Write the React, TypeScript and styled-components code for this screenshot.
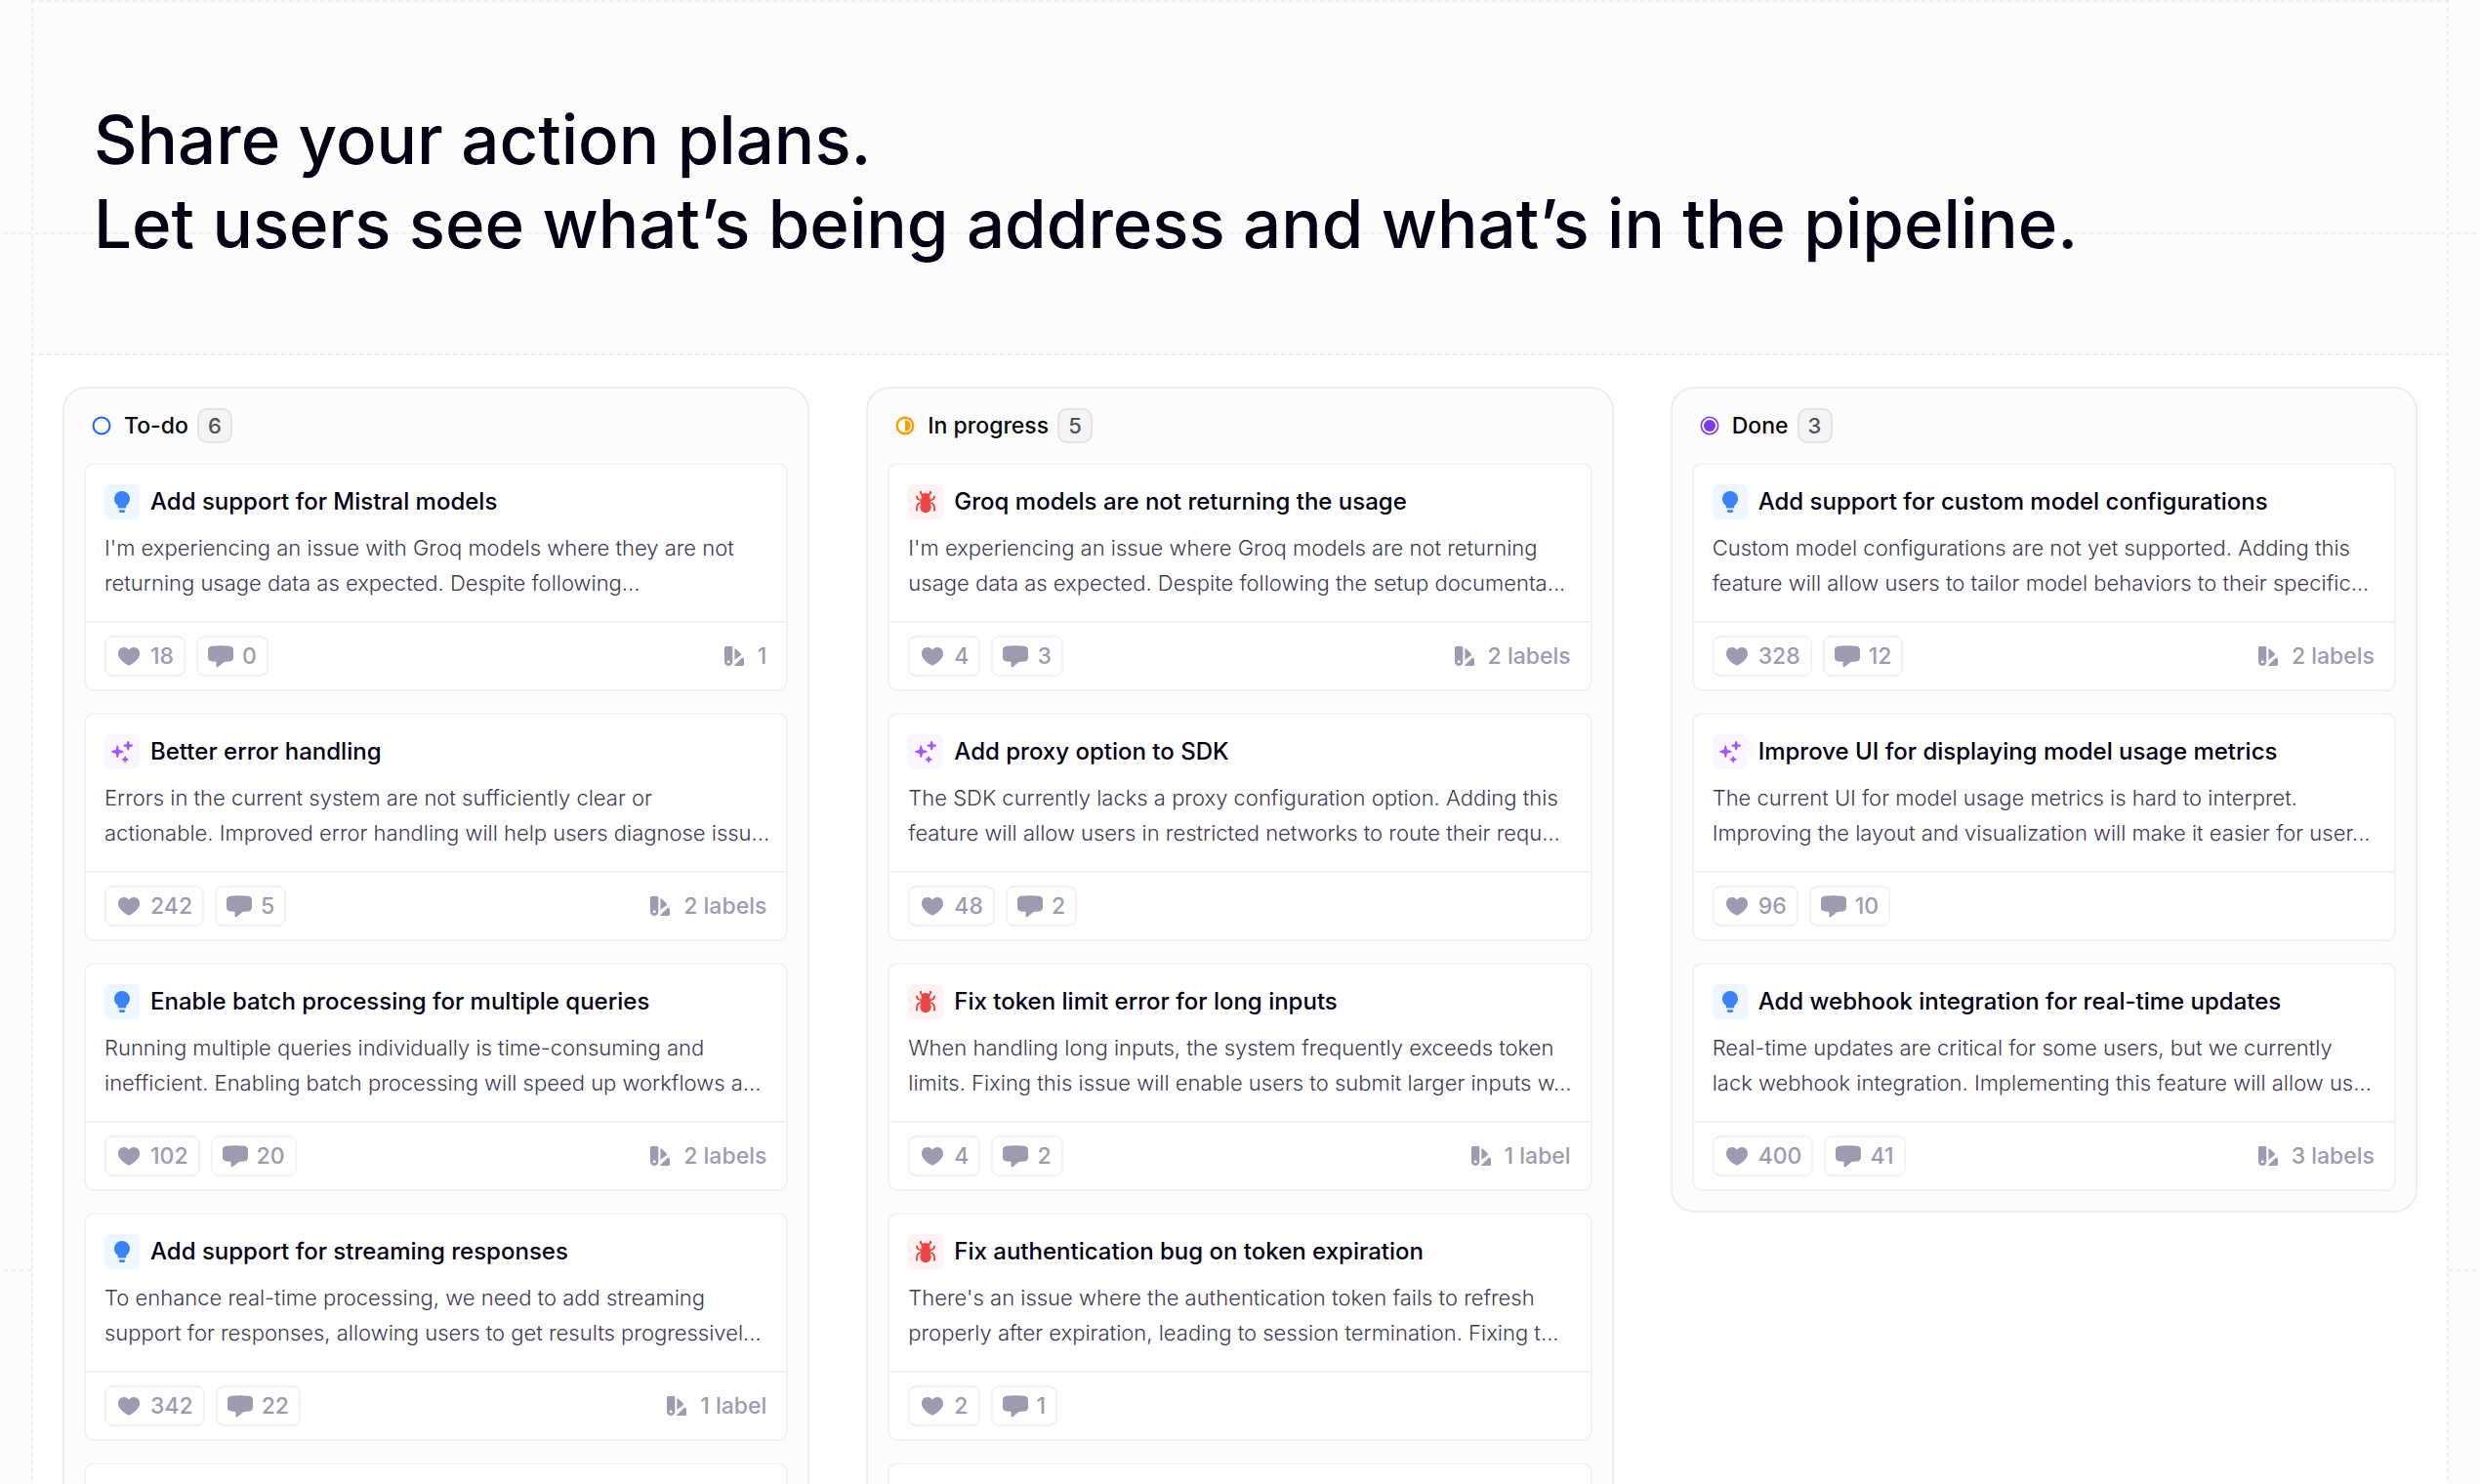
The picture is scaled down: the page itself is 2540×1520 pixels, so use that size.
import React from "react";
import styled, { createGlobalStyle } from "styled-components";

const line = "#eeeeee";
const font = `Inter, "Liberation Sans", sans-serif`;

const GlobalStyle = createGlobalStyle`
  *, *::before, *::after { box-sizing: border-box; }
  body { margin: 0; background: #fcfcfc; font-family: ${font}; }
`;

const rowDash = `repeating-linear-gradient(90deg, ${line} 0 4px, transparent 4px 8px)`;
const colDash = `repeating-linear-gradient(180deg, ${line} 0 4px, transparent 4px 8px)`;

const Page = styled.div`
  position: relative;
  height: 100vh;
  overflow: hidden;
  padding: 0 32px;
  background: #fcfcfc;
`;

const Guide = styled.div<{ $top: number }>`
  position: absolute;
  top: ${(p) => p.$top}px;
  left: 4px;
  right: 4px;
  height: 2px;
  background: ${rowDash};
`;

const Frame = styled.main`
  position: relative;
  min-height: 100%;
  background: ${colDash} left top / 2px 100% no-repeat, ${colDash} right top / 2px 100% no-repeat;
`;

const Hero = styled.header`
  position: relative;
  padding: 100px 64px 92px;
  background: ${rowDash} left top / 100% 2px no-repeat, ${rowDash} left bottom / 100% 2px no-repeat;
`;

const Heading = styled.h1`
  margin: 0;
  font-size: 69px;
  line-height: 86px;
  font-weight: 500;
  color: #030014;
`;

const Board = styled.section`
  display: grid;
  grid-template-columns: repeat(3, minmax(0, 1fr));
  align-items: start;
  gap: 58px;
  margin: 0 2px;
  padding: 32px 30px;
  min-height: 1160px;
  background: #ffffff;
`;

const Column = styled.section`
  padding: 20px;
  border: 2px solid ${line};
  border-radius: 24px;
  background: #fcfcfc;
`;

const ColumnHead = styled.div`
  display: flex;
  align-items: center;
  height: 36px;
  padding-left: 8px;
  margin-bottom: 20px;
`;

const ColumnTitle = styled.h2`
  margin: 0 9px 0 13px;
  font-size: 23px;
  line-height: 36px;
  font-weight: 500;
  color: #09090b;
`;

const Badge = styled.span`
  min-width: 36px;
  height: 36px;
  border: 2px solid #e4e4e7;
  border-radius: 10px;
  background: #f4f4f5;
  font-size: 22px;
  line-height: 32px;
  font-weight: 500;
  text-align: center;
  color: #52525b;
`;

const CardList = styled.div`
  display: flex;
  flex-direction: column;
  gap: 22px;
`;

const Card = styled.article`
  min-height: 234px;
  border: 2px solid #f2f2f3;
  border-radius: 10px;
  background: #ffffff;
`;

const CardBody = styled.div`
  padding: 20px 19px 21px;
`;

const CardHead = styled.div`
  display: flex;
  align-items: center;
  gap: 11px;
  margin-bottom: 11px;
`;

const KindBox = styled.span<{ $bg: string; $fg: string }>`
  display: grid;
  place-items: center;
  width: 36px;
  height: 36px;
  border-radius: 6px;
  background: ${(p) => p.$bg};
  color: ${(p) => p.$fg};
`;

const CardTitle = styled.h3`
  margin: 0;
  font-size: 24px;
  line-height: 36px;
  font-weight: 500;
  color: #030014;
`;

const Text = styled.p`
  margin: 0;
  font-size: 22px;
  line-height: 36px;
  font-weight: 300;
  white-space: pre;
  color: #3f3b54;
`;

const CardFoot = styled.div`
  display: flex;
  align-items: center;
  gap: 11px;
  padding: 13px 20px 13px 19px;
  border-top: 2px solid #f2f2f3;
`;

const Counter = styled.button`
  display: flex;
  align-items: center;
  gap: 9px;
  height: 42px;
  padding: 0 10px;
  border: 2px solid #f2f2f3;
  border-radius: 8px;
  background: #ffffff;
  font: 500 23px/38px ${font};
  color: #9e9bb0;
`;

const Labels = styled.span`
  display: flex;
  align-items: center;
  gap: 14px;
  margin-left: auto;
  font-size: 23px;
  line-height: 42px;
  font-weight: 500;
  color: #9e9bb0;
`;

const HeartIcon = () => (
  <svg width="26" height="26" viewBox="0 0 26 26" fill="currentColor" aria-hidden="true">
    <path d="M13 22.4c-.4 0-.9-.1-1.300-.4C8 20 2 15.600 2 10.400 2 6.900 4.500 4.100 7.900 4.100c2 0 3.900 1 5.100 2.500 1.200-1.500 3.100-2.500 5.100-2.500 3.400 0 5.900 2.800 5.900 6.300 0 5.200-6 9.600-9.700 11.600-.4.300-.9.400-1.300.4z" />
  </svg>
);

const CommentIcon = () => (
  <svg width="26" height="26" viewBox="0 0 26 26" fill="currentColor" aria-hidden="true">
    <path d="M4 2.800C10 1.900 16 1.900 22 2.800c2.600.4 4 1.800 4 4.200v7.400c0 2.400-1.400 3.800-4 4.100-1.800.2-3.500.4-5.300.4l-6.300 5.100c-.9.700-1.900.2-1.900-.9v-4.300c-1.500-.1-3-.2-4.500-.4C1.400 18 0 16.700 0 14.400V7c0-2.400 1.400-3.800 4-4.200z" />
  </svg>
);

const SwatchIcon = () => (
  <svg width="20" height="20" viewBox="0 0 20 20" fill="currentColor" aria-hidden="true">
    <path
      fillRule="evenodd"
      d="M1.500 0h5.300c.8 0 1.500.7 1.500 1.500v14.300a4.150 4.150 0 0 1-8.300 0V1.500C0 .7.700 0 1.500 0zm2.650 14.200a1.500 1.500 0 1 0 0 3 1.500 1.500 0 0 0 0-3z"
    />
    <path d="M10.400 14V2.300c.7 0 1.200.2 1.600.6l4.600 4.300c.6.600.6 1.500 0 2.100z" />
    <path d="M9.600 20l8.200-8.300h.7c.8 0 1.500.7 1.500 1.500v5.300c0 .8-.7 1.500-1.500 1.500z" />
  </svg>
);

const BulbIcon = () => (
  <svg width="24" height="24" viewBox="0 0 24 24" fill="currentColor" aria-hidden="true">
    <path d="M12 1a8 8 0 0 1 8 8c0 2.900-1.500 5.300-3.700 6.800v1.400c0 .8-.6 1.300-1.300 1.300H9c-.7 0-1.300-.5-1.300-1.300v-1.400A8.200 8.200 0 0 1 4 9a8 8 0 0 1 8-8z" />
    <rect x="8.800" y="20.300" width="6.400" height="2.600" rx="1.300" />
  </svg>
);

const SparklesIcon = () => (
  <svg width="24" height="24" viewBox="0 0 24 24" fill="currentColor" aria-hidden="true">
    <path d="M7.300 5.600c.5 0 .8.300.9.800l.8 3.600 3.700.9c1 .3 1 1.600 0 1.900L9 13.700l-.8 3.600c-.2 1-1.600 1-1.800 0l-.8-3.600-3.700-.9c-1-.3-1-1.600 0-1.900L5.600 10l.8-3.600c.1-.5.4-.8.9-.8z" />
    <path d="M18.200.9c.5 0 .8.300.9.700l.6 2.600 2.600.6c1 .2 1 1.600 0 1.800l-2.600.6-.6 2.600c-.2.900-1.600.9-1.800 0l-.6-2.600-2.600-.6c-1-.2-1-1.600 0-1.800l2.600-.6.600-2.600c.1-.4.400-.7.900-.7z" />
    <path d="M15.200 16.600c.5 0 .8.300.9.700l.3 1.300 1.400.4c.9.200.9 1.500 0 1.700l-1.400.4-.3 1.300c-.2.900-1.600.9-1.800 0l-.3-1.300-1.400-.4c-.9-.2-.9-1.500 0-1.700l1.400-.4.3-1.300c.1-.4.400-.7.900-.7z" />
  </svg>
);

const BugIcon = () => (
  <svg width="24" height="24" viewBox="0 0 24 24" fill="currentColor" aria-hidden="true">
    <path d="M12 2.900c2.600 0 4.600 1.700 4.600 4 0 1.700-1 2.700-2.300 3.300H9.700C8.400 9.600 7.400 8.600 7.400 6.900c0-2.300 2-4 4.600-4z" />
    <rect x="7" y="9" width="10" height="5" rx="2.200" />
    <ellipse cx="12" cy="17.300" rx="5.600" ry="5.900" />
    <g fill="none" stroke="currentColor" strokeWidth="1.900" strokeLinecap="round" strokeLinejoin="round">
      <path d="M9.200 4.900C7.500 4.400 6.700 3.300 6.900 1.700M14.800 4.900c1.700-.5 2.500-1.600 2.300-3.200" />
      <path d="M8.600 10.300C5 10.300 3.100 9 3.100 6.500M15.400 10.300c3.600 0 5.500-1.300 5.500-3.800" />
      <path d="M8.600 12.900c-3.800.2-5.500 1.900-5.500 4.700v3.200M15.400 12.900c3.800.2 5.500 1.900 5.500 4.700v3.200" />
    </g>
  </svg>
);

type Kind = "idea" | "bug" | "improvement";

const kinds: Record<Kind, { bg: string; fg: string; icon: React.ReactNode }> = {
  idea: { bg: "#eff6ff", fg: "#3b82f6", icon: <BulbIcon /> },
  bug: { bg: "#fef2f2", fg: "#ef4444", icon: <BugIcon /> },
  improvement: { bg: "#faf5ff", fg: "#a855f7", icon: <SparklesIcon /> },
};

type Status = "todo" | "progress" | "done";

const StatusIcon = ({ status }: { status: Status }) => (
  <svg width="20" height="20" viewBox="0 0 20 20" fill="none" aria-hidden="true">
    {status === "todo" && <circle cx="10" cy="10" r="8.500" stroke="#2563eb" strokeWidth="2" />}
    {status === "progress" && (
      <>
        <circle cx="10" cy="10" r="8.300" stroke="#f59e0b" strokeWidth="2.400" />
        <path d="M10 4.200a5.800 5.800 0 0 1 0 11.600z" fill="#f59e0b" />
      </>
    )}
    {status === "done" && (
      <>
        <circle cx="10" cy="10" r="8.700" stroke="#7c3aed" strokeWidth="1.600" />
        <circle cx="10" cy="10" r="6" fill="#7c3aed" />
      </>
    )}
  </svg>
);

type Item = { kind: Kind; title: string; text: string; likes: number; comments: number; labels?: string };
type ColumnData = { status: Status; name: string; count: number; more: boolean; items: Item[] };

const columns: ColumnData[] = [
  {
    status: "todo",
    name: "To-do",
    count: 6,
    more: true,
    items: [
      { kind: "idea", title: "Add support for Mistral models", text: "I'm experiencing an issue with Groq models where they are not\nreturning usage data as expected. Despite following...", likes: 18, comments: 0, labels: "1" },
      { kind: "improvement", title: "Better error handling", text: "Errors in the current system are not sufficiently clear or\nactionable. Improved error handling will help users diagnose issu...", likes: 242, comments: 5, labels: "2 labels" },
      { kind: "idea", title: "Enable batch processing for multiple queries", text: "Running multiple queries individually is time-consuming and\ninefficient. Enabling batch processing will speed up workflows a...", likes: 102, comments: 20, labels: "2 labels" },
      { kind: "idea", title: "Add support for streaming responses", text: "To enhance real-time processing, we need to add streaming\nsupport for responses, allowing users to get results progressivel...", likes: 342, comments: 22, labels: "1 label" },
    ],
  },
  {
    status: "progress",
    name: "In progress",
    count: 5,
    more: true,
    items: [
      { kind: "bug", title: "Groq models are not returning the usage", text: "I'm experiencing an issue where Groq models are not returning\nusage data as expected. Despite following the setup documenta...", likes: 4, comments: 3, labels: "2 labels" },
      { kind: "improvement", title: "Add proxy option to SDK", text: "The SDK currently lacks a proxy configuration option. Adding this\nfeature will allow users in restricted networks to route their requ...", likes: 48, comments: 2 },
      { kind: "bug", title: "Fix token limit error for long inputs", text: "When handling long inputs, the system frequently exceeds token\nlimits. Fixing this issue will enable users to submit larger inputs w...", likes: 4, comments: 2, labels: "1 label" },
      { kind: "bug", title: "Fix authentication bug on token expiration", text: "There's an issue where the authentication token fails to refresh\nproperly after expiration, leading to session termination. Fixing t...", likes: 2, comments: 1 },
    ],
  },
  {
    status: "done",
    name: "Done",
    count: 3,
    more: false,
    items: [
      { kind: "idea", title: "Add support for custom model configurations", text: "Custom model configurations are not yet supported. Adding this\nfeature will allow users to tailor model behaviors to their specific...", likes: 328, comments: 12, labels: "2 labels" },
      { kind: "improvement", title: "Improve UI for displaying model usage metrics", text: "The current UI for model usage metrics is hard to interpret.\nImproving the layout and visualization will make it easier for user...", likes: 96, comments: 10 },
      { kind: "idea", title: "Add webhook integration for real-time updates", text: "Real-time updates are critical for some users, but we currently\nlack webhook integration. Implementing this feature will allow us...", likes: 400, comments: 41, labels: "3 labels" },
    ],
  },
];

const ItemCard = ({ item }: { item: Item }) => {
  const kind = kinds[item.kind];
  return (
    <Card>
      <CardBody>
        <CardHead>
          <KindBox $bg={kind.bg} $fg={kind.fg}>{kind.icon}</KindBox>
          <CardTitle>{item.title}</CardTitle>
        </CardHead>
        <Text>{item.text}</Text>
      </CardBody>
      <CardFoot>
        <Counter type="button"><HeartIcon />{item.likes}</Counter>
        <Counter type="button"><CommentIcon />{item.comments}</Counter>
        {item.labels && <Labels><SwatchIcon />{item.labels}</Labels>}
      </CardFoot>
    </Card>
  );
};

export default function App() {
  return (
    <Page>
      <GlobalStyle />
      <Guide $top={238} />
      <Guide $top={1300} />
      <Frame>
        <Hero>
          <Heading>
            Share your action plans.
            <br />
            Let users see what’s being address and what’s in the pipeline.
          </Heading>
        </Hero>
        <Board>
          {columns.map((column) => (
            <Column key={column.name}>
              <ColumnHead>
                <StatusIcon status={column.status} />
                <ColumnTitle>{column.name}</ColumnTitle>
                <Badge>{column.count}</Badge>
              </ColumnHead>
              <CardList>
                {column.items.map((item) => (
                  <ItemCard key={item.title} item={item} />
                ))}
                {column.more && <Card />}
              </CardList>
            </Column>
          ))}
        </Board>
      </Frame>
    </Page>
  );
}
